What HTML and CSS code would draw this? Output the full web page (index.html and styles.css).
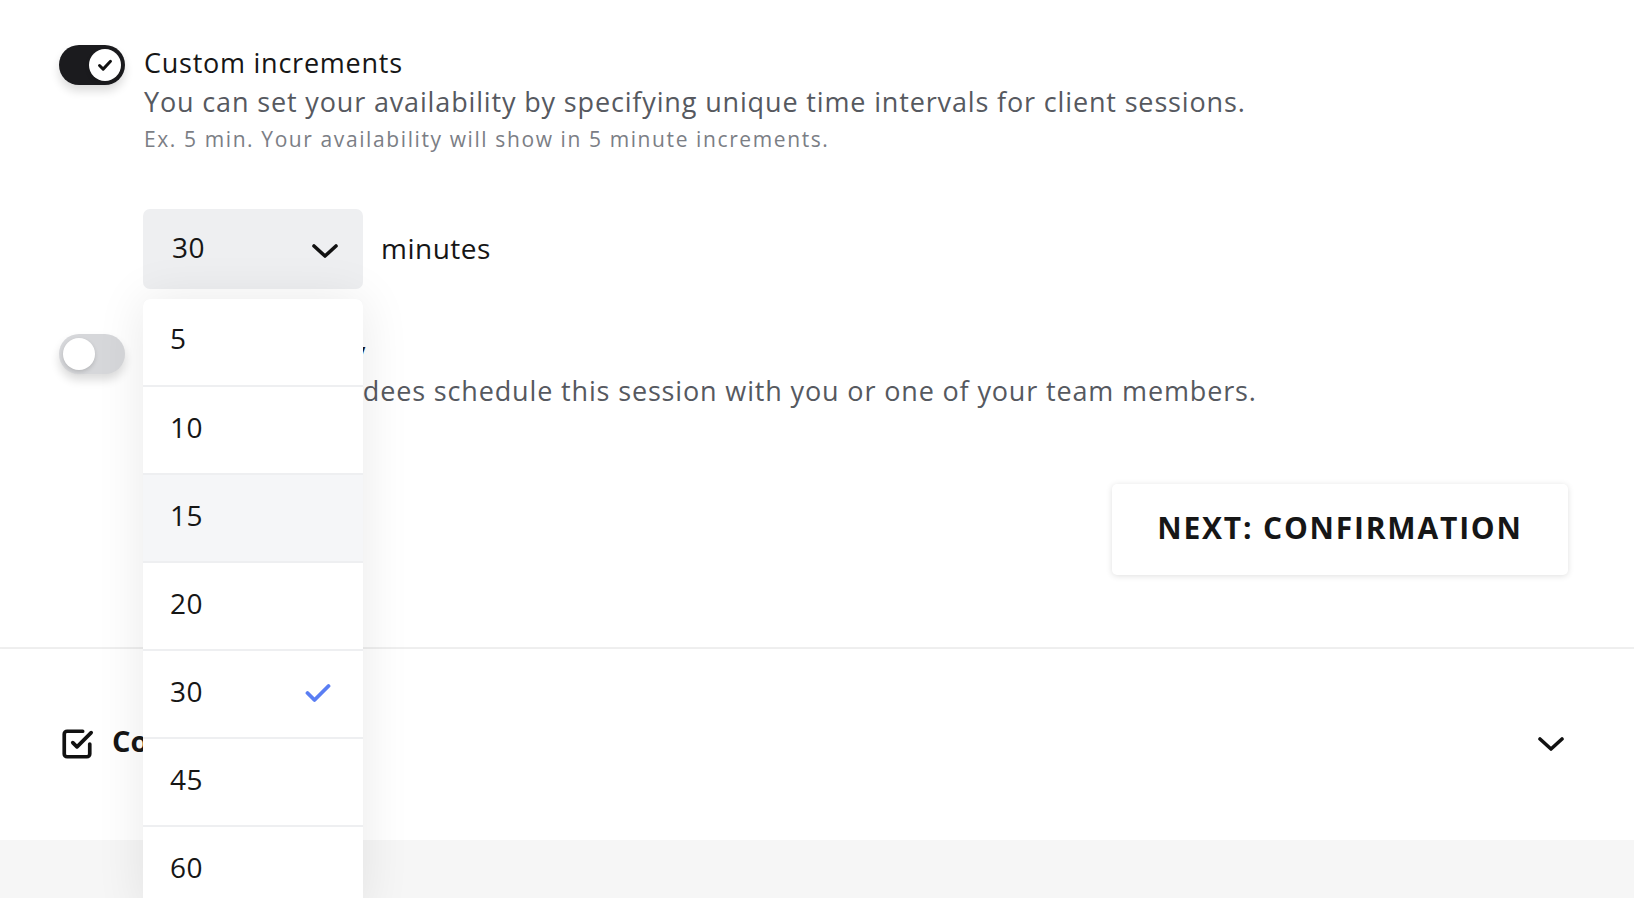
FILE: index.html
```html
<!DOCTYPE html>
<html lang="en">
<head>
<meta charset="utf-8">
<title>Custom increments</title>
<link rel="stylesheet" href="styles.css">
</head>
<body>
<div class="page">
  <section class="card card-top">
    <div class="setting">
      <div class="toggle toggle-on">
        <span class="knob">
          <svg viewBox="0 0 24 24" width="22" height="22"><path d="M6 12.5l4 4 8-8.5" fill="none" stroke="#111" stroke-width="3.2" stroke-linecap="round" stroke-linejoin="round"/></svg>
        </span>
      </div>
      <div class="setting-text">
        <div class="setting-title">Custom increments</div>
        <div class="setting-desc">You can set your availability by specifying unique time intervals for client sessions.</div>
        <div class="setting-note">Ex. 5 min. Your availability will show in 5 minute increments.</div>
        <div class="increment-row">
          <div class="select-wrap">
            <div class="select">
              <span class="select-value">30</span>
              <svg class="chev" viewBox="0 0 26 14" width="26" height="14"><path d="M2 2l11 10L24 2" fill="none" stroke="#111" stroke-width="3.6" stroke-linecap="round" stroke-linejoin="round"/></svg>
            </div>
            <ul class="menu">
              <li class="menu-item">5</li>
              <li class="menu-item">10</li>
              <li class="menu-item hover">15</li>
              <li class="menu-item">20</li>
              <li class="menu-item selected">30
                <svg class="tick" viewBox="0 0 26 20" width="26" height="20"><path d="M2.5 10l7 7L23.5 3" fill="none" stroke="#5a7ef3" stroke-width="3.8" stroke-linecap="round" stroke-linejoin="round"/></svg>
              </li>
              <li class="menu-item">45</li>
              <li class="menu-item">60</li>
            </ul>
          </div>
          <span class="unit">minutes</span>
        </div>
      </div>
    </div>

    <div class="setting setting-second">
      <div class="toggle toggle-off"><span class="knob"></span></div>
      <div class="setting-text">
        <div class="setting-title">Team availability</div>
        <div class="setting-desc">Allow your attendees schedule this session with you or one of your team members.</div>
      </div>
    </div>

    <div class="actions">
      <button class="next-btn" type="button">NEXT: CONFIRMATION</button>
    </div>
  </section>

  <section class="card card-collapsed">
    <div class="collapsed-head">
      <svg class="head-icon" viewBox="0 0 24 24" width="34" height="34"><path d="M9 11l3 3L22 4" fill="none" stroke="#111" stroke-width="2.6" stroke-linecap="round" stroke-linejoin="round"/><path d="M21 12v7a2 2 0 0 1-2 2H5a2 2 0 0 1-2-2V5a2 2 0 0 1 2-2h11" fill="none" stroke="#111" stroke-width="2.6" stroke-linecap="round" stroke-linejoin="round"/></svg>
      <span class="head-title">Confirmation</span>
      <svg class="head-chev" viewBox="0 0 26 16" width="26" height="16"><path d="M2 3l11 10L24 3" fill="none" stroke="#111" stroke-width="3.6" stroke-linecap="round" stroke-linejoin="round"/></svg>
    </div>
  </section>

  <div class="footer-bg"></div>
</div>
</body>
</html>
```

FILE: styles.css
```css
* { box-sizing: border-box; }
html, body { margin: 0; padding: 0; }
body {
  font-family: "Open Sans", Lato, Arial, sans-serif;
  color: #1a1a1a;
  background: #f6f6f6;
  overflow: hidden;
}
.page { width: 1634px; height: 898px; display: flex; flex-direction: column; }

.card { background: #fff; }
.card-top {
  padding: 44px 66px 72px 59px;
  border-bottom: 2px solid #efefef;
}

.setting { display: flex; align-items: flex-start; gap: 19px; }
.setting-second { margin-top: 44px; }

.toggle {
  flex: none;
  width: 66px;
  height: 40px;
  border-radius: 20px;
  margin-top: 1px;
  display: flex;
  align-items: center;
  padding: 0 4px;
  box-shadow: 0 6px 10px rgba(0,0,0,0.14);
}
.toggle-on { background: #1b1b1e; justify-content: flex-end; }
.toggle-off { background: #d6d7da; justify-content: flex-start; }
.knob {
  width: 32px; height: 32px; border-radius: 50%;
  background: #fff;
  display: flex; align-items: center; justify-content: center;
  box-shadow: 0 2px 4px rgba(0,0,0,0.15);
}

.setting-text { display: flex; flex-direction: column; }
.setting-title { font-size: 27px; line-height: 38px; color: #161616; letter-spacing: 0.75px; }
.setting-desc { font-size: 27px; line-height: 40px; color: #56595f; letter-spacing: 0.85px; }
.setting-note { font-size: 21px; line-height: 34px; color: #7b7e85; letter-spacing: 1.6px; }

.increment-row { display: flex; align-items: center; gap: 18px; margin-top: 53px; margin-left: -1px; }
.select-wrap { position: relative; }
.select {
  width: 220px; height: 80px;
  background: #eeeff1;
  border-radius: 7px;
  display: flex; align-items: center; justify-content: space-between;
  padding: 0 25px 0 29px;
}
.select-value { font-size: 28px; color: #161616; margin-top: -4px; letter-spacing: 0.5px; }
.chev { margin-top: 4px; }
.unit { font-size: 28px; color: #161616; margin-top: -3px; letter-spacing: 0.5px; }

.menu {
  position: absolute;
  top: 90px; left: 0;
  width: 220px;
  margin: 0; padding: 0;
  list-style: none;
  background: #eeeff1;
  border-radius: 7px 7px 0 0;
  box-shadow: 0 0 50px rgba(0,0,0,0.09);
  display: flex; flex-direction: column; gap: 2px;
  z-index: 10;
}
.menu-item {
  height: 86px;
  background: #fff;
  display: flex; align-items: center; justify-content: space-between;
  padding: 0 32px 6px 27px;
  font-size: 28px; color: #161616;
  letter-spacing: 0.5px;
}
.menu-item:first-child { border-radius: 7px 7px 0 0; padding-bottom: 8px; }
.menu-item.hover { background: #f5f6f8; }
.tick { margin-top: 4px; }

.actions { display: flex; justify-content: flex-end; margin-top: 73px; }
.next-btn {
  width: 456px; height: 91px;
  border: none;
  background: #fff;
  border-radius: 5px;
  box-shadow: 0 1px 6px rgba(0,0,0,0.13);
  font-family: "Open Sans", Lato, Arial, sans-serif;
  font-weight: 700;
  font-size: 30px;
  letter-spacing: 1.8px;
  padding: 0 0 4px 0;
  color: #161616;
}

.card-collapsed {
  height: 191px;
  box-shadow: 0 3px 5px rgba(0,0,0,0.06);
  padding: 0 70px 0 60px;
  display: flex; align-items: center;
}
.collapsed-head { flex: 1; display: flex; align-items: center; }
.head-icon { flex: none; margin-top: -2px; }
.head-title { font-size: 29px; font-weight: 700; margin-left: 18px; margin-top: -9px; color: #161616; }
.head-chev { margin-left: auto; margin-top: -1px; }

.footer-bg { flex: 1; background: #f6f6f6; }
```
